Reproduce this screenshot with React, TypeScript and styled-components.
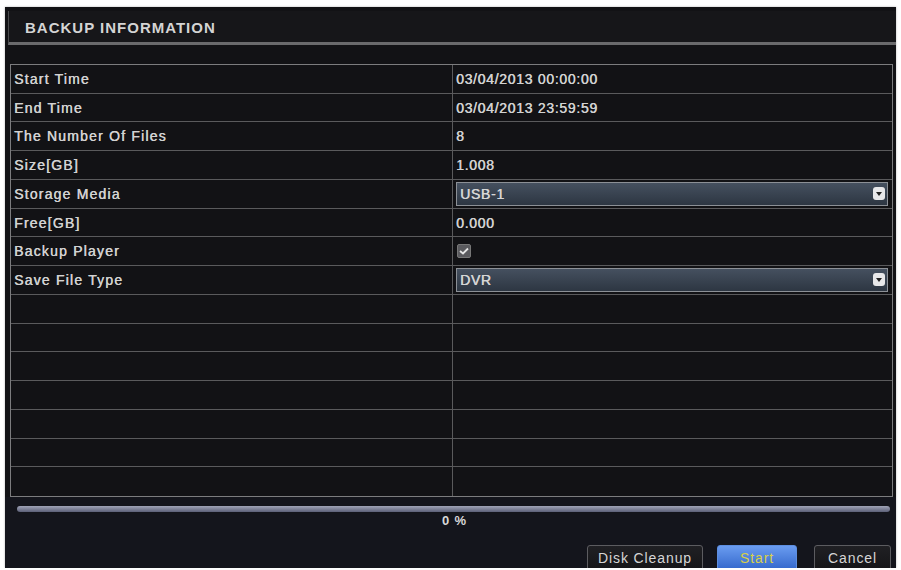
import React from "react";
import styled, { createGlobalStyle } from "styled-components";

const Global = createGlobalStyle`
  html, body { margin: 0; padding: 0; background: #ffffff; }
  body { font-family: "Liberation Sans", Arial, sans-serif; }
`;

const Panel = styled.div`
  margin: 7px 0 0 5px;
  width: 891px;
  height: 561px;
  box-sizing: border-box;
  background: #121215;
  display: flex;
  flex-direction: column;
  overflow: hidden;
  box-shadow: 0 0 2px rgba(0,0,0,0.3);
`;

const Header = styled.div`
  flex-shrink: 0;
  margin: 4px 0 0 3px;
  height: 34px;
  box-sizing: border-box;
  border-left: 1px solid #4a4a4c;
  border-bottom: 3px solid #6a6a6c;
  background: #161619;
  display: flex;
  align-items: center;
  padding-left: 16px;
  padding-top: 2px;
`;

const Title = styled.span`
  color: #d4d4d4;
  font-size: 15px;
  font-weight: bold;
  letter-spacing: 1px;
`;

const Table = styled.div`
  flex-shrink: 0;
  margin: 19px 0 0 5px;
  width: 883px;
  height: 433px;
  box-sizing: border-box;
  border: 1px solid #7c7c7e;
  display: grid;
  grid-template-columns: 442px 1fr;
  grid-template-rows: repeat(15, 1fr);
`;

const Cell = styled.div<{ $left?: boolean; $last?: boolean }>`
  box-sizing: border-box;
  border-bottom: ${(p) => (p.$last ? "none" : "1px solid #5a5a5c")};
  border-right: ${(p) => (p.$left ? "1px solid #5a5a5c" : "none")};
  display: flex;
  align-items: center;
  padding-left: 3px;
  padding-right: 4px;
  color: #d2d2d2;
  font-size: 14px;
  letter-spacing: ${(p) => (p.$left ? "1.2px" : "0.7px")};
  text-shadow: 0.4px 0 0 #d2d2d2;
  white-space: nowrap;
  min-width: 0;
`;

const Select = styled.div`
  flex: 1;
  height: 24px;
  box-sizing: border-box;
  border: 1px solid #8c9096;
  background: linear-gradient(#45505f, #2d3642);
  display: flex;
  align-items: center;
  justify-content: space-between;
  padding: 0 2px 0 3px;
  color: #d6d6d6;
`;

const Arrow = styled.span`
  width: 12px;
  height: 13px;
  border-radius: 3px;
  background: #e8e8ea;
  display: flex;
  align-items: center;
  justify-content: center;
  &::after {
    content: "";
    border-left: 3.5px solid transparent;
    border-right: 3.5px solid transparent;
    border-top: 4px solid #222;
  }
`;

const Check = styled.span`
  width: 14px;
  height: 14px;
  margin-left: 1px;
  border-radius: 2px;
  background: #5a5a5e;
  border: 1px solid #777;
  box-sizing: border-box;
  display: flex;
  align-items: center;
  justify-content: center;
`;

const Footer = styled.div`
  flex: 1 0 auto;
  background: #14151c;
  display: flex;
  flex-direction: column;
`;

const Progress = styled.div`
  margin: 9px 6px 0 12px;
  height: 6px;
  border-radius: 3px;
  background: linear-gradient(#a0a4b8, #5c6078);
`;

const Percent = styled.div`
  margin-top: 2px;
  height: 14px;
  line-height: 14px;
  text-align: center;
  padding-left: 8px;
  color: #d8d8d8;
  font-size: 13px;
  font-weight: bold;
  letter-spacing: 0.8px;
`;

const Buttons = styled.div`
  margin-top: 17px;
  display: flex;
  justify-content: flex-end;
  padding-right: 5px;
`;

const Button = styled.div<{ $w: number; $primary?: boolean; $gap: number }>`
  width: ${(p) => p.$w}px;
  margin-left: ${(p) => p.$gap}px;
  height: 28px;
  box-sizing: border-box;
  border: 1px solid ${(p) => (p.$primary ? "#5d8ee0" : "#5c5c60")};
  border-radius: 3px 3px 0 0;
  background: ${(p) =>
    p.$primary ? "linear-gradient(#6a9cf0, #2e62c8)" : "linear-gradient(#202024, #141417)"};
  color: ${(p) => (p.$primary ? "#d8cf48" : "#d6d6d6")};
  font-size: 14px;
  letter-spacing: 0.9px;
  display: flex;
  justify-content: center;
  padding-top: 4px;
`;

const rows: { label: string; value?: string }[] = [
  { label: "Start Time", value: "03/04/2013 00:00:00" },
  { label: "End Time", value: "03/04/2013 23:59:59" },
  { label: "The Number Of Files", value: "8" },
  { label: "Size[GB]", value: "1.008" },
  { label: "Storage Media", value: "select:USB-1" },
  { label: "Free[GB]", value: "0.000" },
  { label: "Backup Player", value: "check" },
  { label: "Save File Type", value: "select:DVR" },
];

const renderValue = (v?: string) => {
  if (v && v.startsWith("select:")) {
    return (
      <Select>
        <span>{v.slice(7)}</span>
        <Arrow />
      </Select>
    );
  }
  if (v === "check") {
    return (
      <Check>
        <svg width="10" height="8" viewBox="0 0 10 8">
          <path d="M1 4 L4 6.5 L9 1.5" stroke="#e6e6e6" strokeWidth="1.8" fill="none" />
        </svg>
      </Check>
    );
  }
  return v;
};

export default function App() {
  const all = [...rows, ...Array.from({ length: 7 }, () => ({ label: "", value: "" }))];
  return (
    <>
      <Global />
      <Panel>
        <Header>
          <Title>BACKUP INFORMATION</Title>
        </Header>
        <Table>
          {all.map((r, i) => (
            <React.Fragment key={i}>
              <Cell $left $last={i === all.length - 1}>{r.label}</Cell>
              <Cell $last={i === all.length - 1}>{renderValue(r.value)}</Cell>
            </React.Fragment>
          ))}
        </Table>
        <Footer>
          <Progress />
          <Percent>0 %</Percent>
          <Buttons>
            <Button $w={116} $gap={0}>Disk Cleanup</Button>
            <Button $w={80} $gap={14} $primary>Start</Button>
            <Button $w={77} $gap={17}>Cancel</Button>
          </Buttons>
        </Footer>
      </Panel>
    </>
  );
}
